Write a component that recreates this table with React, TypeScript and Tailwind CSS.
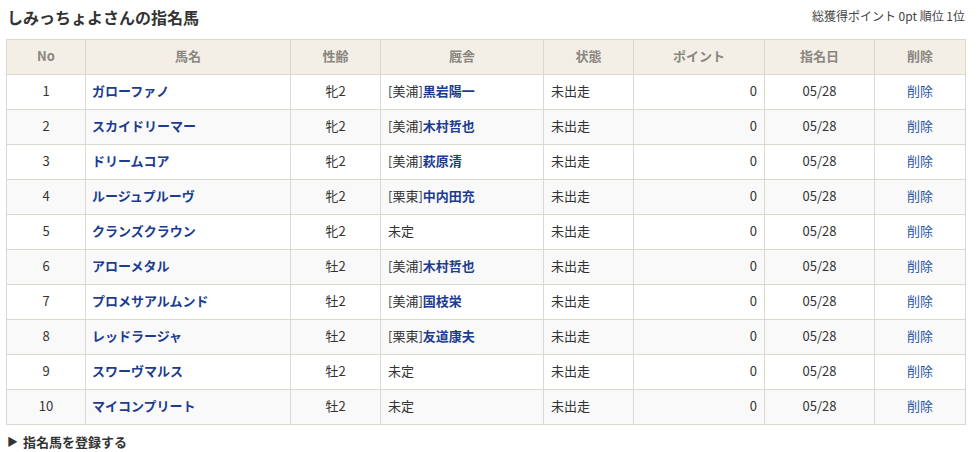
import React from "react";

type Row = {
  no: number;
  name: string;
  sex: string;
  region: string | null;
  trainer: string | null;
};

const rows: Row[] = [
  { no: 1, name: "ガローファノ", sex: "牝2", region: "美浦", trainer: "黒岩陽一" },
  { no: 2, name: "スカイドリーマー", sex: "牝2", region: "美浦", trainer: "木村哲也" },
  { no: 3, name: "ドリームコア", sex: "牝2", region: "美浦", trainer: "萩原清" },
  { no: 4, name: "ルージュプルーヴ", sex: "牝2", region: "栗東", trainer: "中内田充" },
  { no: 5, name: "クランズクラウン", sex: "牝2", region: null, trainer: null },
  { no: 6, name: "アローメタル", sex: "牡2", region: "美浦", trainer: "木村哲也" },
  { no: 7, name: "プロメサアルムンド", sex: "牡2", region: "美浦", trainer: "国枝栄" },
  { no: 8, name: "レッドラージャ", sex: "牡2", region: "栗東", trainer: "友道康夫" },
  { no: 9, name: "スワーヴマルス", sex: "牡2", region: null, trainer: null },
  { no: 10, name: "マイコンプリート", sex: "牡2", region: null, trainer: null },
];

const th = "border border-[#ddd8cf] font-bold text-[#8a8680] text-center h-[35px] px-[6px] pb-[2px]";
const td = "border border-[#ddd8cf] h-[35px] px-[6px] pb-[2px]";

export default function App() {
  return (
    <div
      className="w-[977px] h-[452px] bg-white text-[13px] text-[#333] overflow-hidden"
      style={{ fontFamily: '"Noto Sans CJK JP", "Noto Sans", sans-serif' }}
    >
      <div className="flex items-start justify-between pl-[7px] pr-[12px] pt-[9px] h-[39px]">
        <h1 className="text-[16px] font-bold text-[#333] leading-none">しみっちょよさんの指名馬</h1>
        <div className="text-[12px] text-[#444] leading-none pt-[1px]">総獲得ポイント 0pt 順位 1位</div>
      </div>

      <table className="ml-[6px] w-[959px] table-fixed border-collapse">
        <colgroup>
          <col className="w-[79px]" />
          <col className="w-[205px]" />
          <col className="w-[90px]" />
          <col className="w-[163px]" />
          <col className="w-[90px]" />
          <col className="w-[131px]" />
          <col className="w-[110px]" />
          <col className="w-[91px]" />
        </colgroup>
        <thead>
          <tr className="bg-[#f3efe7]">
            <th className={th}>No</th>
            <th className={th}>馬名</th>
            <th className={th}>性齢</th>
            <th className={th}>厩舎</th>
            <th className={th}>状態</th>
            <th className={th}>ポイント</th>
            <th className={th}>指名日</th>
            <th className={th}>削除</th>
          </tr>
        </thead>
        <tbody>
          {rows.map((r, i) => (
            <tr key={r.no} className={i % 2 === 1 ? "bg-[#f9f9f9]" : "bg-white"}>
              <td className={td + " text-center"}>{r.no}</td>
              <td className={td}>
                <a className="font-bold text-[#1b3c8f]">{r.name}</a>
              </td>
              <td className={td + " text-center"}>{r.sex}</td>
              <td className={td + " pl-[7px]"}>
                {r.region ? (
                  <>
                    [{r.region}]<a className="font-bold text-[#1b3c8f]">{r.trainer}</a>
                  </>
                ) : (
                  "未定"
                )}
              </td>
              <td className={td + " pl-[7px]"}>未出走</td>
              <td className={td + " text-right pr-[7px]"}>0</td>
              <td className={td + " text-center"}>05/28</td>
              <td className={td + " text-center"}>
                <a className="text-[#2a55a8]">削除</a>
              </td>
            </tr>
          ))}
        </tbody>
      </table>

      <div className="flex items-center gap-[5px] pl-[7px] pt-[7px] font-bold text-[13px] text-[#333]">
        <span className="text-[11px] leading-none">▶</span>
        <span>指名馬を登録する</span>
      </div>
    </div>
  );
}
